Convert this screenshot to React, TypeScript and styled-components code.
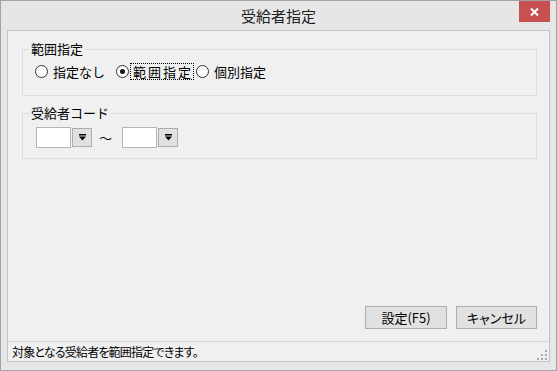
import React from "react";
import styled, { createGlobalStyle, css } from "styled-components";

const Global = createGlobalStyle`
  html, body { margin: 0; padding: 0; background: #e6e6e6; }
  * { box-sizing: border-box; }
  body {
    font-family: "Noto Sans CJK JP", "Noto Sans", sans-serif;
    color: #000;
  }
`;

const Window = styled.div`
  width: 557px;
  height: 371px;
  border: 1px solid #a3a3a3;
  background: #e6e6e6;
  display: flex;
  flex-direction: column;
`;

const TitleBar = styled.div`
  height: 29px;
  flex: none;
  display: grid;
  grid-template-columns: 1fr auto 1fr;
  align-items: center;
`;

const Title = styled.div`
  grid-column: 2;
  font-size: 15px;
  line-height: 20px;
  color: #1e1e1e;
  margin-top: 1px;
`;

const CloseButton = styled.div`
  grid-column: 3;
  justify-self: end;
  align-self: start;
  width: 31px;
  height: 21px;
  margin-right: 6px;
  background: #c75050;
  display: flex;
  align-items: center;
  justify-content: center;
`;

const Client = styled.div`
  flex: 1;
  margin: 0 6px 8px 6px;
  border: 1px solid #c4c4c4;
  background: #f0f0f0;
  display: flex;
  flex-direction: column;
`;

const Body = styled.div`
  flex: 1;
  display: flex;
  flex-direction: column;
  padding: 11px 12px 12px 14px;
`;

const Group = styled.fieldset<{ $pb: number }>`
  margin: 0;
  padding: 7px 12px ${(p) => p.$pb}px 12px;
  border: 1px solid #dcdcdc;
  min-width: 0;
  & + & { margin-top: 10px; }
`;

const Legend = styled.legend`
  margin-left: -6px;
  padding: 0 2px;
  font-size: 13px;
  line-height: 14px;
  height: 14px;
`;

const RadioRow = styled.div`
  display: flex;
  align-items: center;
  height: 17px;
`;

const RadioItem = styled.label<{ $w?: number }>`
  display: flex;
  align-items: center;
  flex: none;
  width: ${(p) => (p.$w ? `${p.$w}px` : "auto")};
`;

const RadioCircle = styled.span<{ $checked?: boolean }>`
  width: 13px;
  height: 13px;
  border-radius: 50%;
  border: 1px solid #333;
  background: #fff;
  flex: none;
  display: flex;
  align-items: center;
  justify-content: center;
  &::after {
    content: "";
    width: 5px;
    height: 5px;
    border-radius: 50%;
    background: ${(p) => (p.$checked ? "#111" : "transparent")};
  }
`;

const RadioText = styled.span<{ $focused?: boolean }>`
  margin-left: 1px;
  font-size: 13px;
  line-height: 15px;
  border: 1px dotted transparent;
  padding: 0 3px;
  white-space: nowrap;
  ${(p) =>
    p.$focused &&
    css`
      border-color: #000;
      padding: 0 0 0 2px;
      letter-spacing: 2px;
    `}
`;

const FieldRow = styled.div`
  display: flex;
  align-items: center;
  padding-left: 1px;
  height: 21px;
`;

const TextBox = styled.div`
  width: 35px;
  height: 21px;
  border: 1px solid #b4b4b4;
  background: #fff;
`;

const DropButton = styled.div`
  width: 20px;
  height: 19px;
  margin-left: 1px;
  border: 1px solid #adadad;
  background: #e1e1e1;
  display: flex;
  align-items: center;
  justify-content: center;
`;

const Tilde = styled.span`
  width: 12px;
  margin: 0 11px 0 7px;
  font-size: 13px;
  line-height: 15px;
  text-align: center;
`;

const Spacer = styled.div`
  flex: 1;
`;

const ButtonRow = styled.div`
  display: flex;
  justify-content: flex-end;
  gap: 9px;
`;

const Button = styled.button<{ $w: number }>`
  width: ${(p) => p.$w}px;
  height: 23px;
  margin: 0;
  padding: 0;
  border: 1px solid #adadad;
  background: #e1e1e1;
  font-family: "Noto Sans CJK JP", "Noto Sans", sans-serif;
  font-size: 13px;
  line-height: 15px;
  font-feature-settings: "palt";
  color: #000;
`;

const StatusBar = styled.div`
  height: 20px;
  flex: none;
  border-top: 1px solid #d7d7d7;
  display: flex;
  align-items: stretch;
  padding-left: 4px;
`;

const StatusText = styled.div`
  flex: 1;
  font-size: 12px;
  line-height: 19px;
  letter-spacing: -0.8px;
  font-feature-settings: "palt";
  white-space: nowrap;
`;

const Grip = styled.svg`
  align-self: flex-end;
  margin: 0 2px 1px 0;
  flex: none;
`;

const DropArrow = () => (
  <svg width="7" height="7" viewBox="0 0 7 7">
    <rect x="0" y="0" width="7" height="1.5" fill="#000" />
    <polygon points="0,2.5 7,2.5 3.5,6.5" fill="#000" />
  </svg>
);

const Combo = () => (
  <>
    <TextBox />
    <DropButton>
      <DropArrow />
    </DropButton>
  </>
);

export default function App() {
  return (
    <>
      <Global />
      <Window>
        <TitleBar>
          <Title>受給者指定</Title>
          <CloseButton>
            <svg width="9" height="8" viewBox="0 0 9 8">
              <path d="M1 0.5 L8 7.5 M8 0.5 L1 7.5" stroke="#fff" strokeWidth="2" />
            </svg>
          </CloseButton>
        </TitleBar>
        <Client>
          <Body>
            <Group $pb={15}>
              <Legend>範囲指定</Legend>
              <RadioRow>
                <RadioItem $w={81}>
                  <RadioCircle />
                  <RadioText>指定なし</RadioText>
                </RadioItem>
                <RadioItem $w={80}>
                  <RadioCircle $checked />
                  <RadioText $focused>範囲指定</RadioText>
                </RadioItem>
                <RadioItem>
                  <RadioCircle />
                  <RadioText>個別指定</RadioText>
                </RadioItem>
              </RadioRow>
            </Group>
            <Group $pb={10}>
              <Legend>受給者コード</Legend>
              <FieldRow>
                <Combo />
                <Tilde>～</Tilde>
                <Combo />
              </FieldRow>
            </Group>
            <Spacer />
            <ButtonRow>
              <Button $w={82}>設定(F5)</Button>
              <Button $w={81}>キャンセル</Button>
            </ButtonRow>
          </Body>
          <StatusBar>
            <StatusText>対象となる受給者を範囲指定できます。</StatusText>
            <Grip width="10" height="10" viewBox="0 0 10 10">
              <rect x="8" y="0" width="2" height="2" fill="#a8a8a8" />
              <rect x="4" y="4" width="2" height="2" fill="#a8a8a8" />
              <rect x="8" y="4" width="2" height="2" fill="#a8a8a8" />
              <rect x="0" y="8" width="2" height="2" fill="#a8a8a8" />
              <rect x="4" y="8" width="2" height="2" fill="#a8a8a8" />
              <rect x="8" y="8" width="2" height="2" fill="#a8a8a8" />
            </Grip>
          </StatusBar>
        </Client>
      </Window>
    </>
  );
}
